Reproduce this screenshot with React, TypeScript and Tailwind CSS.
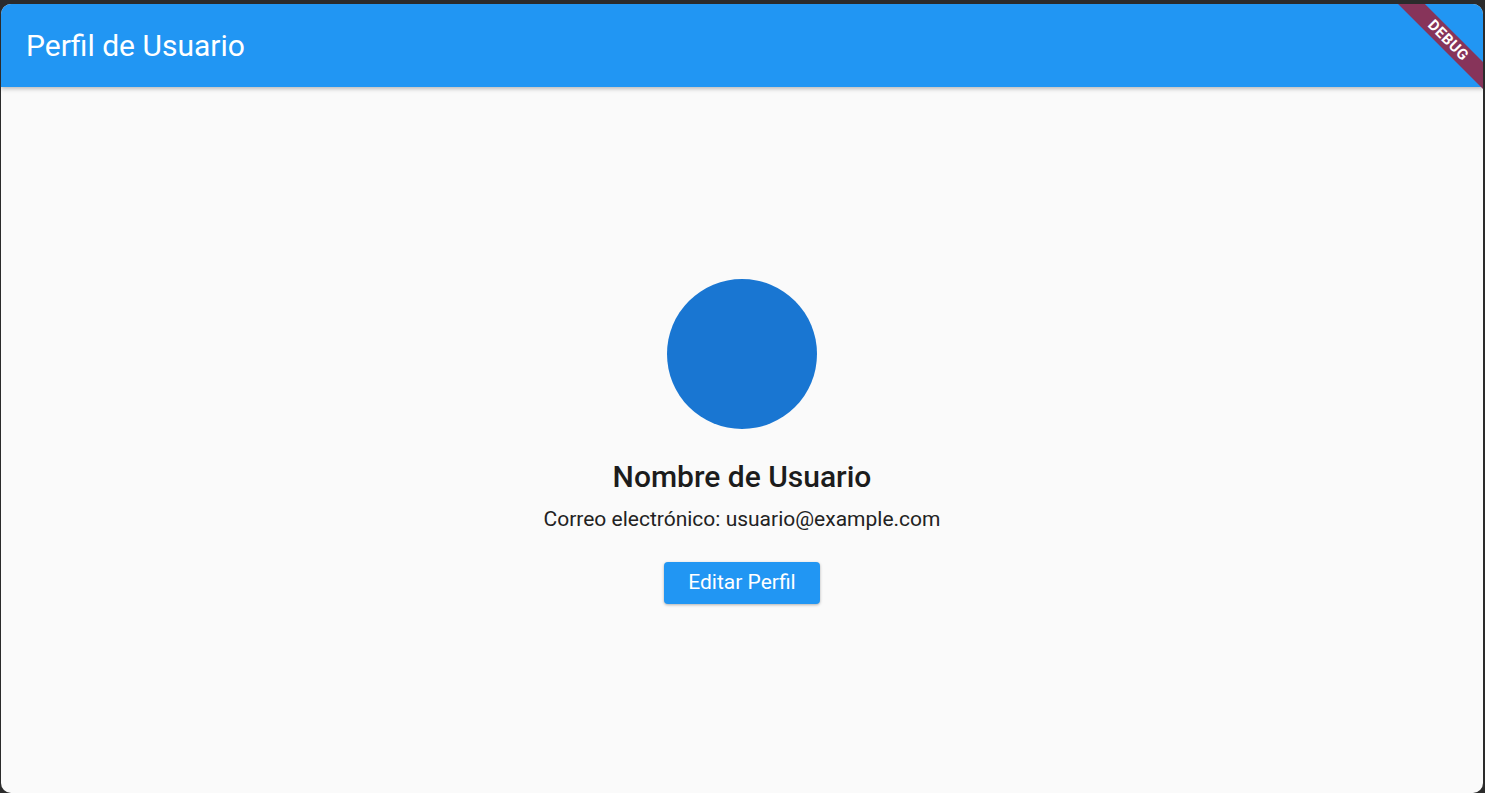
export default function App() {
  return (
    <div className="h-[793px] w-full bg-[#2b2b2b] pt-[4px] pl-[1px] pr-[2px] font-['Roboto',sans-serif]">
      <div className="relative flex h-full flex-col overflow-hidden rounded-[10px] bg-[#fafafa]">
        {/* app bar */}
        <header className="z-10 flex h-[83px] shrink-0 items-center bg-[#2196f3] px-[25px] shadow-[0_2px_4px_rgba(0,0,0,0.25)]">
          <h1 className="text-[30px] font-normal text-white">Perfil de Usuario</h1>
        </header>

        {/* body */}
        <main className="flex flex-1 flex-col items-center justify-center pt-[2px]">
          <div className="h-[150px] w-[150px] rounded-full bg-[#1976d2]" />
          <h2 className="mt-[30px] text-[30px] font-medium leading-[35px] text-[#1c1c1c]">
            Nombre de Usuario
          </h2>
          <p className="mt-[13px] text-[21px] leading-[25px] text-[#222]">
            Correo electrónico: usuario@example.com
          </p>
          <button className="mt-[30px] h-[42px] w-[156px] rounded-[4px] bg-[#2196f3] text-[21px] text-white shadow-[0_1px_3px_rgba(0,0,0,0.3)]">
            Editar Perfil
          </button>
        </main>

        {/* debug banner */}
        <div className="absolute right-[-40px] top-[27px] z-20 flex h-[19px] w-[150px] rotate-45 items-center justify-center bg-[#87345a]">
          <span className="text-[15px] font-bold leading-none tracking-[0.5px] text-white">DEBUG</span>
        </div>
      </div>
    </div>
  );
}
